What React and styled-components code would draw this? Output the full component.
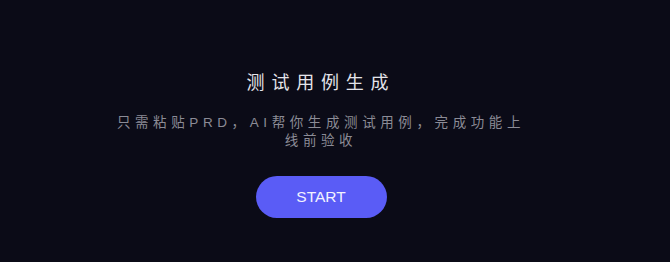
import styled, { createGlobalStyle } from "styled-components";

const GlobalStyle = createGlobalStyle`
  html, body {
    margin: 0;
    padding: 0;
    background-color: #0b0b17;
  }
  body {
    font-family: "Liberation Sans", "Noto Sans CJK SC", sans-serif;
  }
`;

const Page = styled.main`
  width: 100%;
  height: 262px;
  box-sizing: border-box;
  background-color: #0b0b17;
  display: flex;
  flex-direction: column;
  align-items: center;
  padding: 70px 28px 0 0;
`;

const Title = styled.h1`
  margin: 0;
  color: #e4e4ea;
  font-size: 18px;
  font-weight: 400;
  letter-spacing: 6.8px;
  line-height: 26px;
  text-align: center;
`;

const Description = styled.p`
  margin: 18px 0 0;
  max-width: 416px;
  color: #8b8b96;
  font-size: 13.5px;
  letter-spacing: 4.6px;
  line-height: 18px;
  text-align: center;
`;

const StartButton = styled.button`
  margin-top: 26px;
  width: 131px;
  height: 42px;
  border: none;
  border-radius: 21px;
  background-color: #5a5cf6;
  color: #f2f2ff;
  font-family: "Liberation Sans", sans-serif;
  font-size: 15.5px;
  cursor: pointer;
`;

export default function App() {
  return (
    <>
      <GlobalStyle />
      <Page>
        <Title>测试用例生成</Title>
        <Description>
          只需粘贴PRD，AI帮你生成测试用例，完成功能上线前验收
        </Description>
        <StartButton>START</StartButton>
      </Page>
    </>
  );
}
